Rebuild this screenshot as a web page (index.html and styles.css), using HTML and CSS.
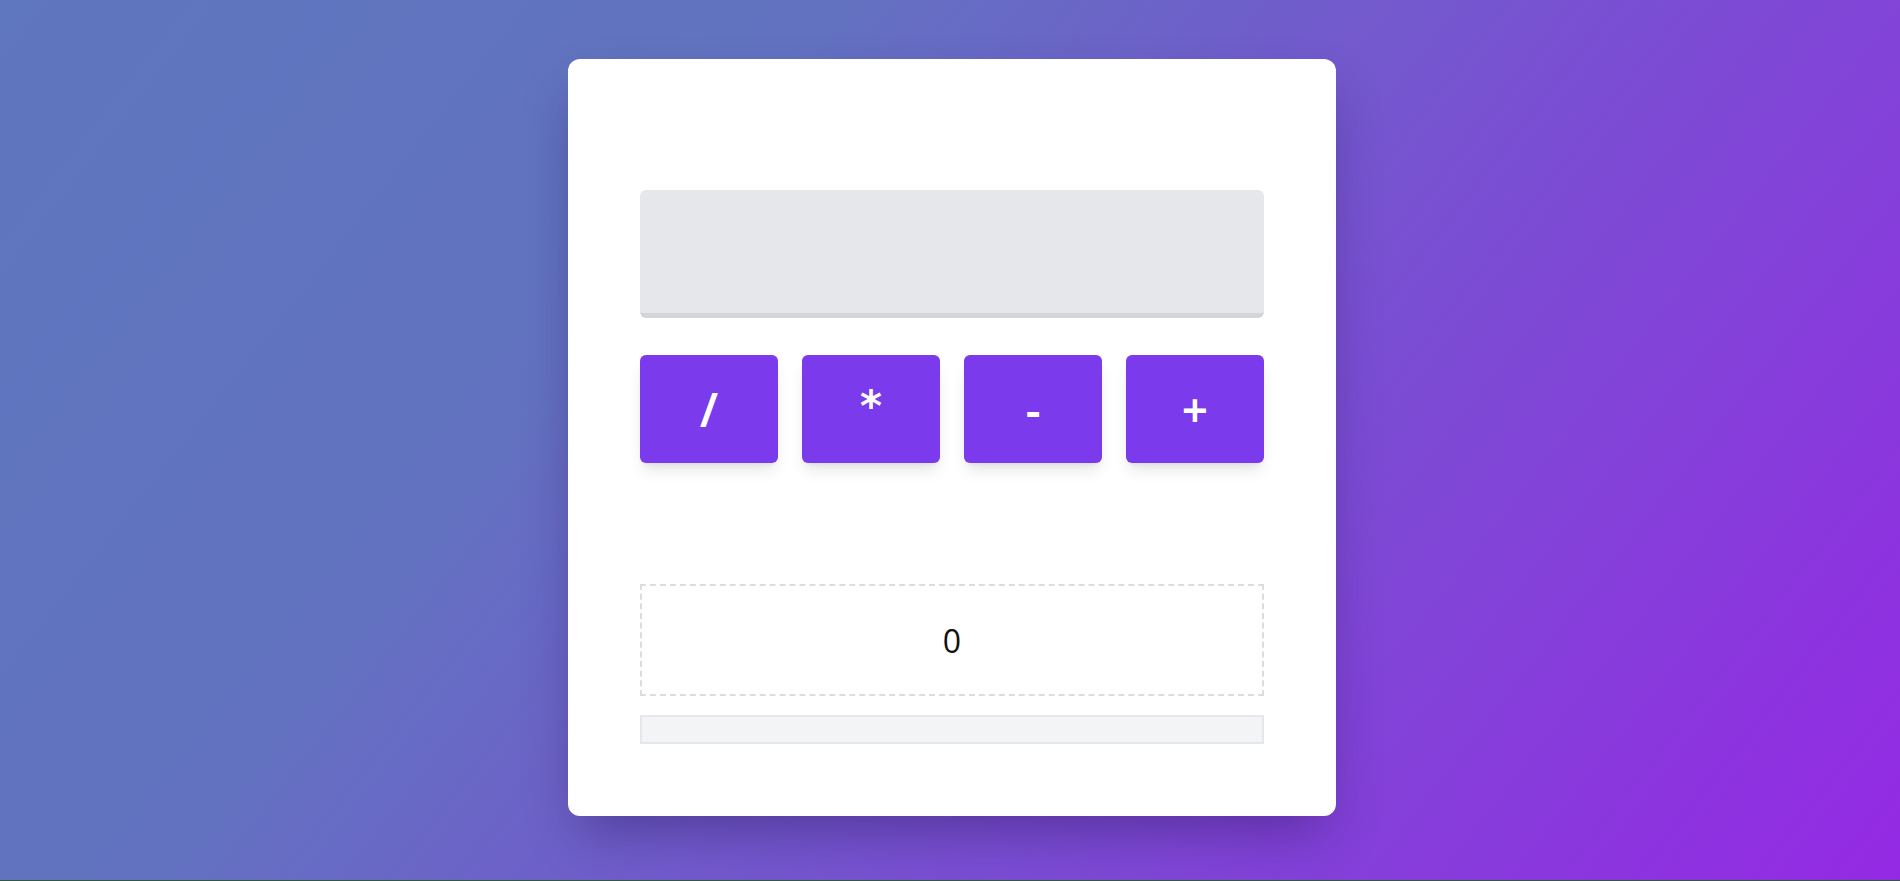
FILE: index.html
```html
<!DOCTYPE html>
<html lang="en">
<head>
<meta charset="utf-8">
<title>Calculator</title>
<link rel="stylesheet" href="styles.css">
</head>
<body>
  <main class="card">
    <div class="display"></div>
    <div class="ops">
      <button class="op">/</button>
      <button class="op op-mul">*</button>
      <button class="op">-</button>
      <button class="op">+</button>
    </div>
    <div class="result">0</div>
    <div class="bar"></div>
  </main>
</body>
</html>
```

FILE: styles.css
```css
html {
  background: #2f5a3c;
  height: 100%;
}
body {
  margin: 0;
  height: 880px;
  background: linear-gradient(128deg, #5f77be 0%, #6272c0 32%, #7950d2 62%, #9429e4 100%);
  display: flex;
  justify-content: center;
  align-items: flex-start;
  padding-left: 4px;
  box-sizing: border-box;
  font-family: "Noto Sans", "Open Sans", sans-serif;
}
.card {
  margin-top: 59px;
  width: 768px;
  box-sizing: border-box;
  background: #ffffff;
  border-radius: 12px;
  padding: 131px 72px 72px;
  box-shadow: 0 25px 50px -12px rgba(40, 20, 90, 0.45);
  display: flex;
  flex-direction: column;
}
.display {
  height: 123px;
  background: #e5e7eb;
  border-bottom: 5px solid #d4d5da;
  border-radius: 6px;
}
.ops {
  margin-top: 37px;
  display: grid;
  grid-template-columns: repeat(4, 1fr);
  gap: 24px;
}
.op {
  height: 108px;
  border: none;
  border-radius: 6px;
  background: #7c3aed;
  color: #ffffff;
  font-family: "Noto Sans", "Open Sans", sans-serif;
  font-size: 46px;
  font-weight: 600;
  line-height: 1;
  box-shadow: 0 10px 15px -3px rgba(0, 0, 0, 0.1), 0 4px 6px -4px rgba(0, 0, 0, 0.1);
  padding: 0;
}
.op-mul {
  font-family: "DejaVu Sans", sans-serif;
  font-size: 42px;
  font-weight: 700;
  padding-bottom: 4px;
}
.result {
  margin-top: 121px;
  height: 112px;
  box-sizing: border-box;
  border: 2px dashed #dcdcdc;
  display: flex;
  align-items: center;
  justify-content: center;
  font-family: "Open Sans", sans-serif;
  font-size: 32px;
  color: #111111;
}
.bar {
  margin-top: 19px;
  height: 29px;
  box-sizing: border-box;
  background: #f3f4f6;
  border: 2px solid #e5e7eb;
}
```
